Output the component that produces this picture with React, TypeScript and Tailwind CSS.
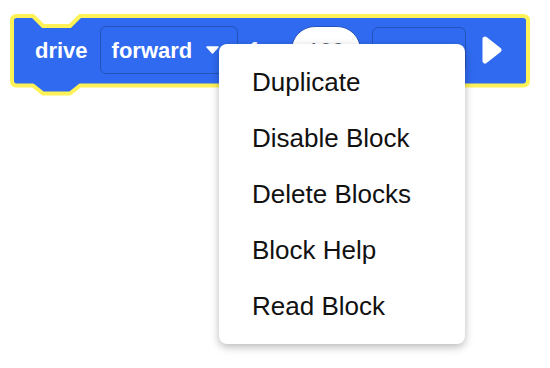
import React from 'react';

const menuItems = ['Duplicate', 'Disable Block', 'Delete Blocks', 'Block Help', 'Read Block'];

function BlockShape() {
    // outline of the blockly "drive" block, in block-local coords (origin = page 10,14)
    const d =
        'M 2 6.5 Q 2 2 6.5 2 L 23 2 L 33 12 L 60 12 L 70 2 L 513 2 Q 518 2 518 6.5 ' +
        'L 518 66.5 Q 518 71.5 513 71.5 L 70 71.5 L 60 79.5 L 33 79.5 L 23 71.5 L 6.5 71.5 Q 2 71.5 2 66.5 Z';
    return (
        <svg className="absolute inset-0" width="520" height="84" viewBox="0 0 520 84">
            <path d={d} fill="#2f6af0" stroke="#fff257" strokeWidth="4" strokeLinejoin="round" />
        </svg>
    );
}

export default function App() {
    return (
        <div className="relative w-[550px] h-[368px] bg-white overflow-hidden" style={{ fontFamily: '"Liberation Sans", Arial, sans-serif' }}>
            {/* block on the workspace */}
            <div className="absolute left-[10px] top-[14px] w-[520px] h-[84px]">
                <BlockShape />
                <div className="relative flex items-center h-[72px] pl-[25px] pr-[28px] text-white font-bold text-[22px]">
                    <span>drive</span>
                    <div className="ml-[12px] flex items-center h-[48px] w-[138px] rounded-[6px] border border-[#2553b9] pl-[11px]">
                        <span>forward</span>
                        <svg className="ml-[14px]" width="13" height="8" viewBox="0 0 13 8">
                            <path d="M1 1 L12 1 L6.5 7 Z" fill="white" stroke="white" strokeWidth="1.5" strokeLinejoin="round" />
                        </svg>
                    </div>
                    <span className="ml-[12px]">for</span>
                    <div className="ml-[12px] flex items-center justify-center h-[48px] w-[70px] rounded-full bg-white border border-[#2553b9] text-[#575e75] font-normal">
                        100
                    </div>
                    <div className="ml-[11px] h-[46px] w-[94px] rounded-[6px] border border-[#2553b9]" />
                    <svg className="ml-auto" width="20" height="28" viewBox="0 0 20 28">
                        <path d="M3 3 L17 14 L3 25 Z" fill="white" stroke="white" strokeWidth="5" strokeLinejoin="round" />
                    </svg>
                </div>
            </div>

            {/* context menu */}
            <div className="absolute left-[219px] top-[44px] w-[246px] h-[300px] py-[10px] bg-white rounded-[8px] shadow-[0_3px_8px_rgba(0,0,0,0.28)]">
                {menuItems.map(item => (
                    <div key={item} className="h-[56px] flex items-center pl-[33px] text-[26px] text-[#111]">
                        {item}
                    </div>
                ))}
            </div>
        </div>
    );
}
